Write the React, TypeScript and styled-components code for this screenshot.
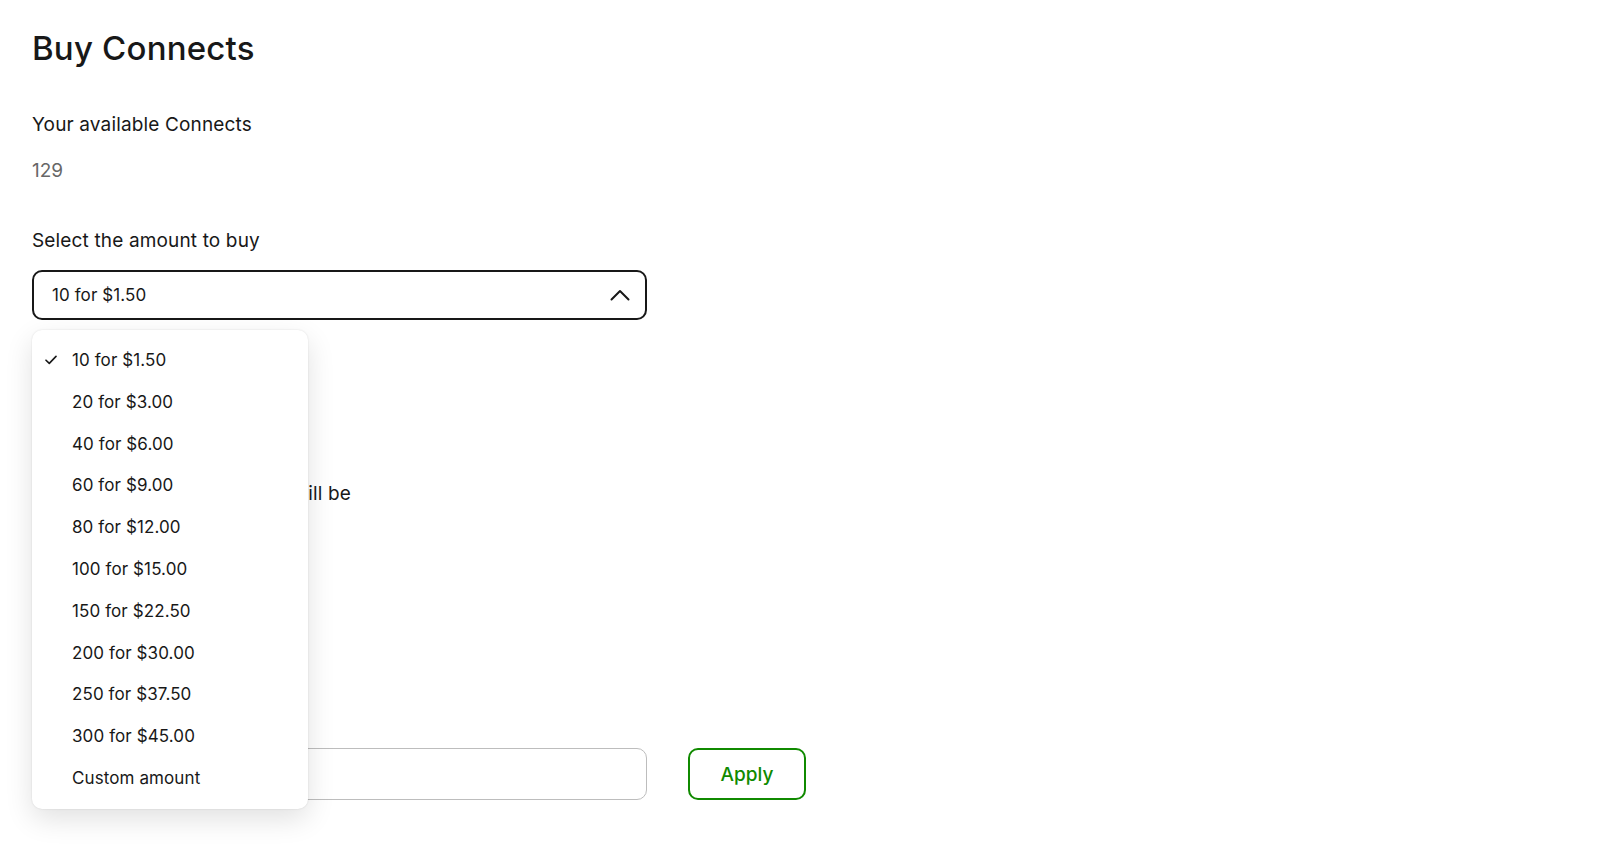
import React from "react";
import styled, { createGlobalStyle } from "styled-components";

const Global = createGlobalStyle`
  html, body { margin: 0; padding: 0; background: #ffffff; }
  body { font-family: Inter, "Noto Sans", "Liberation Sans", sans-serif; color: #181818; }
  * { box-sizing: border-box; }
`;

const Page = styled.main`
  padding: 28px 32px 0 32px;
  width: 1600px;
  height: 846px;
  overflow: hidden;
`;

const Title = styled.h1`
  margin: 0;
  font-size: 33px;
  line-height: 40px;
  font-weight: 500;
  letter-spacing: 0.2px;
`;

const Label = styled.div<{ $top: number }>`
  margin-top: ${(p) => p.$top}px;
  font-size: 19px;
  line-height: 24px;
  font-weight: 400;
  letter-spacing: 0.15px;
`;

const Value = styled.div<{ $top: number }>`
  margin-top: ${(p) => p.$top}px;
  font-size: 19px;
  line-height: 24px;
  color: #676767;
`;

const SelectWrap = styled.div`
  position: relative;
  margin-top: 17px;
  width: 615px;
`;

const SelectBox = styled.div`
  height: 50px;
  border: 2px solid #181818;
  border-radius: 10px;
  display: flex;
  align-items: center;
  justify-content: space-between;
  padding: 0 15px 0 18px;
  font-size: 17px;
  letter-spacing: 0.1px;
`;

const Menu = styled.ul`
  position: absolute;
  top: calc(100% + 10px);
  left: 0;
  width: 276px;
  margin: 0;
  padding: 9px 0 10px 0;
  list-style: none;
  background: #ffffff;
  border-radius: 10px;
  box-shadow: 0 10px 28px rgba(0, 0, 0, 0.12), 0 0 2px rgba(0, 0, 0, 0.12);
  z-index: 10;
`;

const MenuItem = styled.li`
  position: relative;
  height: 41.8px;
  line-height: 42px;
  padding-left: 40px;
  font-size: 17px;
  letter-spacing: 0.1px;
  color: #181818;
`;

const CheckMark = styled.svg`
  position: absolute;
  left: 13px;
  top: 16px;
`;

const Sentence = styled.div<{ $top: number }>`
  margin-top: ${(p) => p.$top}px;
  font-size: 19px;
  line-height: 24px;
  letter-spacing: 0.15px;
  white-space: nowrap;
`;

const PromoRow = styled.div<{ $top: number }>`
  margin-top: ${(p) => p.$top}px;
  display: flex;
  align-items: center;
  gap: 41px;
`;

const PromoInput = styled.input`
  width: 615px;
  height: 52px;
  border: 1px solid #bdbdbd;
  border-radius: 10px;
  padding: 0 16px;
  font-size: 17px;
  font-family: inherit;
  outline: none;
`;

const ApplyButton = styled.button`
  width: 118px;
  height: 52px;
  border: 2px solid #108a00;
  border-radius: 10px;
  background: #ffffff;
  color: #108a00;
  font-family: inherit;
  font-size: 19px;
  font-weight: 500;
  cursor: pointer;
`;

const options = [
  "10 for $1.50",
  "20 for $3.00",
  "40 for $6.00",
  "60 for $9.00",
  "80 for $12.00",
  "100 for $15.00",
  "150 for $22.50",
  "200 for $30.00",
  "250 for $37.50",
  "300 for $45.00",
  "Custom amount",
];

export default function App() {
  return (
    <>
      <Global />
      <Page>
        <Title>Buy Connects</Title>
        <Label $top={45}>Your available Connects</Label>
        <Value $top={22}>129</Value>
        <Label $top={46}>Select the amount to buy</Label>
        <SelectWrap>
          <SelectBox>
            <span>10 for $1.50</span>
            <svg width="20" height="12" viewBox="0 0 20 12" fill="none">
              <polyline points="1.5,10.5 10,2 18.5,10.5" stroke="#181818" strokeWidth="2" strokeLinecap="round" strokeLinejoin="round" />
            </svg>
          </SelectBox>
          <Menu>
            {options.map((o, i) => (
              <MenuItem key={o}>
                {i === 0 && (
                  <CheckMark width="12" height="10" viewBox="0 0 12 10" fill="none">
                    <polyline points="1,5.2 4.3,8.4 11,1.4" stroke="#181818" strokeWidth="1.6" strokeLinecap="round" strokeLinejoin="round" />
                  </CheckMark>
                )}
                {o}
              </MenuItem>
            ))}
          </Menu>
        </SelectWrap>
        <Sentence $top={162}>Your new Connects balance will be</Sentence>
        <PromoRow $top={242}>
          <PromoInput aria-label="Promo code" />
          <ApplyButton>Apply</ApplyButton>
        </PromoRow>
      </Page>
    </>
  );
}
